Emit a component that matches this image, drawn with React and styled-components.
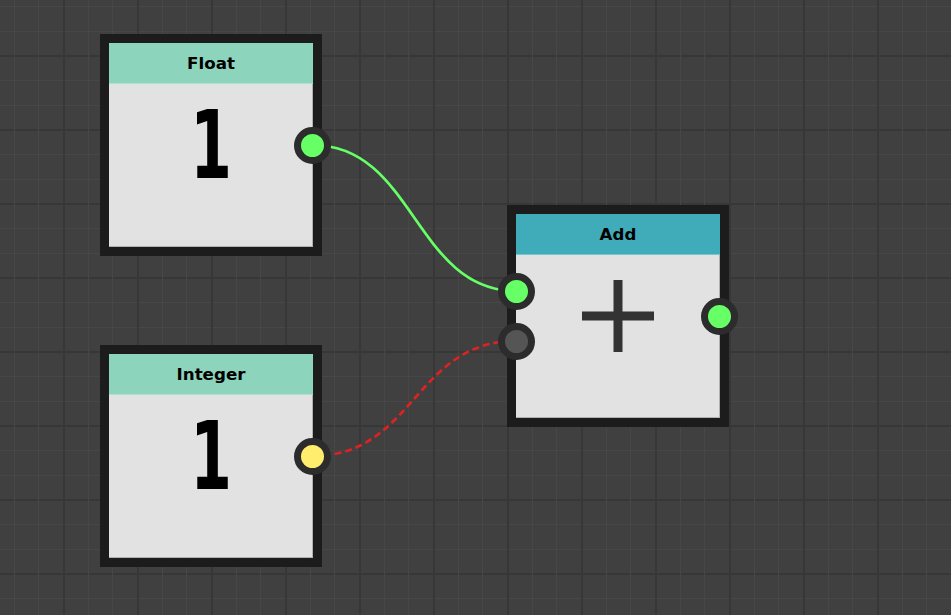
import React from "react";
import styled, { createGlobalStyle } from "styled-components";

const GlobalStyle = createGlobalStyle`
  html, body {
    margin: 0;
    padding: 0;
    background: #404040;
  }
  body {
    font-family: "DejaVu Sans", Verdana, sans-serif;
    overflow: hidden;
  }
`;

const MAJOR = "#373737";
const MINOR = "#474747";

const Canvas = styled.div`
  position: relative;
  width: 951px;
  height: 615px;
  overflow: hidden;
  background-color: #404040;
  background-image:
    linear-gradient(
      to right,
      ${MAJOR} 0 2px,
      transparent 2px 25px,
      ${MINOR} 25px 26px,
      transparent 26px 49px,
      ${MINOR} 49px 50px,
      transparent 50px
    ),
    linear-gradient(
      to bottom,
      ${MAJOR} 0 2px,
      transparent 2px 25px,
      ${MINOR} 25px 26px,
      transparent 26px 50px,
      ${MINOR} 50px 51px,
      transparent 51px
    );
  background-size: 74px 74px;
  background-position: 63px 55px;
`;

const WireLayer = styled.svg`
  position: absolute;
  left: 0;
  top: 0;
  width: 951px;
  height: 615px;
  pointer-events: none;
`;

const NodeBox = styled.div`
  position: absolute;
  left: ${(p) => p.$x}px;
  top: ${(p) => p.$y}px;
  width: 204px;
  height: 204px;
  border: 9px solid #1c1c1c;
  background: #e2e2e2;
  display: flex;
  flex-direction: column;
`;

const Header = styled.div`
  height: 40px;
  flex: none;
  background: ${(p) => p.$color};
  border-bottom: 1px solid ${(p) => p.$edge};
  display: flex;
  align-items: center;
  justify-content: center;
  font-family: "DejaVu Sans", Verdana, sans-serif;
  font-weight: bold;
  font-size: 16.7px;
  color: #000;
`;

const Body = styled.div`
  flex: 1;
  display: flex;
  align-items: center;
  justify-content: center;
  padding-bottom: 41px;
  box-shadow: inset -1px -1px 0 #b0b0b0;
`;

const Value = styled.div`
  font-family: "DejaVu Sans", Verdana, sans-serif;
  font-weight: bold;
  font-size: 95px;
  line-height: 1;
  color: #000;
  transform: scaleX(0.63);
`;

const PlusIcon = styled.svg`
  display: block;
  width: 72px;
  height: 72px;
`;

const Socket = styled.div`
  position: absolute;
  width: 23px;
  height: 23px;
  border: 7px solid #2c2c2c;
  border-radius: 50%;
  background: ${(p) => p.$color};
  ${(p) => (p.$side === "right" ? "right: -18px;" : "left: -18px;")}
  top: calc(50% - 18.5px + ${(p) => p.$offset}px);
`;

const INNER = 204;
const BORDER = 9;

const nodes = [
  {
    id: "float",
    title: "Float",
    x: 100,
    y: 34,
    header: "#8dd4bc",
    edge: "#b0e0cf",
    kind: "value",
    value: "1",
    outputs: [{ color: "#66ff66", offset: 0 }],
    inputs: [],
  },
  {
    id: "integer",
    title: "Integer",
    x: 100,
    y: 345,
    header: "#8dd4bc",
    edge: "#b0e0cf",
    kind: "value",
    value: "1",
    outputs: [{ color: "#ffee6e", offset: 0 }],
    inputs: [],
  },
  {
    id: "add",
    title: "Add",
    x: 507,
    y: 205,
    header: "#40acba",
    edge: "#78c4cf",
    kind: "plus",
    outputs: [{ color: "#66ff66", offset: 0 }],
    inputs: [
      { color: "#66ff66", offset: -25 },
      { color: "#555555", offset: 25 },
    ],
  },
];

function socketPos(node, side, offset) {
  const cy = node.y + BORDER + INNER / 2 + offset;
  const cx =
    side === "right"
      ? node.x + BORDER + INNER - 0.5
      : node.x + BORDER + 0.5;
  return [cx, cy];
}

const byId = Object.fromEntries(nodes.map((n) => [n.id, n]));

const wires = [
  { from: ["float", 0], to: ["add", 0], color: "#66ff66", dash: null },
  { from: ["integer", 0], to: ["add", 1], color: "#dd2222", dash: "7 4" },
];

function wirePath(w) {
  const a = byId[w.from[0]];
  const b = byId[w.to[0]];
  const [x1, y1] = socketPos(a, "right", a.outputs[w.from[1]].offset);
  const [x2, y2] = socketPos(b, "left", b.inputs[w.to[1]].offset);
  const d = (x2 - x1) / 2;
  return `M ${x1} ${y1} C ${x1 + d} ${y1}, ${x2 - d} ${y2}, ${x2} ${y2}`;
}

function Plus() {
  return (
    <PlusIcon viewBox="0 0 72 72">
      <rect x="0" y="31.5" width="72" height="9" fill="#333333" />
      <rect x="31.5" y="0" width="9" height="72" fill="#333333" />
    </PlusIcon>
  );
}

function Node({ node }) {
  return (
    <NodeBox $x={node.x} $y={node.y}>
      <Header $color={node.header} $edge={node.edge}>
        {node.title}
      </Header>
      <Body>
        {node.kind === "value" ? <Value>{node.value}</Value> : <Plus />}
      </Body>
      {node.inputs.map((s, i) => (
        <Socket key={"in" + i} $side="left" $color={s.color} $offset={s.offset} />
      ))}
      {node.outputs.map((s, i) => (
        <Socket key={"out" + i} $side="right" $color={s.color} $offset={s.offset} />
      ))}
    </NodeBox>
  );
}

export default function App() {
  return (
    <>
      <GlobalStyle />
      <Canvas>
        <WireLayer viewBox="0 0 951 615">
          {wires.map((w, i) => (
            <path
              key={i}
              d={wirePath(w)}
              fill="none"
              stroke={w.color}
              strokeWidth="2.7"
              strokeDasharray={w.dash || undefined}
            />
          ))}
        </WireLayer>
        {nodes.map((n) => (
          <Node key={n.id} node={n} />
        ))}
      </Canvas>
    </>
  );
}
